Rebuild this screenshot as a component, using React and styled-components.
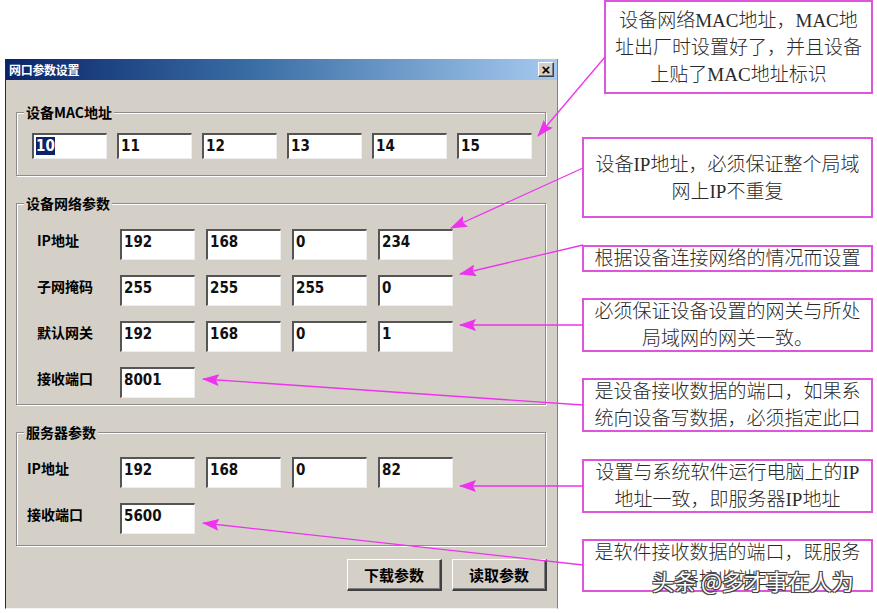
import React from "react";
import styled, { createGlobalStyle } from "styled-components";

const GlobalStyle = createGlobalStyle`
  html, body {
    margin: 0;
    padding: 0;
    background: #ffffff;
  }
  body {
    width: 877px;
    height: 613px;
    overflow: hidden;
  }
`;

const macs = ["10", "11", "12", "13", "14", "15"];

const deviceRows = [
  { label: "IP地址", values: ["192", "168", "0", "234"] },
  { label: "子网掩码", values: ["255", "255", "255", "0"] },
  { label: "默认网关", values: ["192", "168", "0", "1"] },
  { label: "接收端口", values: ["8001"] },
];

const serverRows = [
  { label: "IP地址", values: ["192", "168", "0", "82"] },
  { label: "接收端口", values: ["5600"] },
];

const notes = [
  { gap: 0, height: 94, indent: 22, lines: ["设备网络MAC地址，MAC地", "址出厂时设置好了，并且设备", "上贴了MAC地址标识"] },
  { gap: 43, height: 81, indent: 0, lines: ["设备IP地址，必须保证整个局域", "网上IP不重复"] },
  { gap: 27, height: 27, indent: 0, lines: ["根据设备连接网络的情况而设置"] },
  { gap: 26, height: 54, indent: 0, lines: ["必须保证设备设置的网关与所处", "局域网的网关一致。"] },
  { gap: 26, height: 54, indent: 0, lines: ["是设备接收数据的端口，如果系", "统向设备写数据，必须指定此口"] },
  { gap: 27, height: 54, indent: 0, lines: ["设置与系统软件运行电脑上的IP", "地址一致，即服务器IP地址"] },
  { gap: 26, height: 53, indent: 0, lines: ["是软件接收数据的端口，既服务", "器接收端口"] },
];

// start (callout edge) -> tip (near the field)
const arrows = [
  [605, 57, 538, 136],
  [583, 168, 451, 228],
  [583, 245, 460, 274],
  [583, 325, 460, 325],
  [583, 405, 203, 379],
  [583, 486, 460, 486],
  [583, 565, 203, 523],
];

export default function App() {
  return (
    <>
      <GlobalStyle />
      <Page>
        <Dialog>
          <TitleBar>
            <TitleText>网口参数设置</TitleText>
            <CloseButton>×</CloseButton>
          </TitleBar>
          <Body>
            <Group $height={64} $padTop={20}>
              <GroupTitle>设备MAC地址</GroupTitle>
              <MacRow>
                {macs.map((m, i) => (
                  <Field key={m} $h={26}>
                    {i === 0 ? <Selected>{m}</Selected> : m}
                  </Field>
                ))}
              </MacRow>
            </Group>

            <Group $height={202} $padTop={25} $mt={27}>
              <GroupTitle>设备网络参数</GroupTitle>
              <Rows>
                {deviceRows.map((r) => (
                  <Row key={r.label}>
                    <Label $pad={20}>{r.label}</Label>
                    {r.values.map((v, i) => (
                      <Field key={i} $h={31}>{v}</Field>
                    ))}
                  </Row>
                ))}
              </Rows>
            </Group>

            <Group $height={114} $padTop={24} $mt={27}>
              <GroupTitle>服务器参数</GroupTitle>
              <Rows>
                {serverRows.map((r) => (
                  <Row key={r.label}>
                    <Label $pad={10}>{r.label}</Label>
                    {r.values.map((v, i) => (
                      <Field key={i} $h={31}>{v}</Field>
                    ))}
                  </Row>
                ))}
              </Rows>
            </Group>

            <Buttons>
              <Button>下载参数</Button>
              <Button>读取参数</Button>
            </Buttons>
          </Body>
        </Dialog>

        <Notes>
          {notes.map((n, i) => (
            <Note key={i} $gap={n.gap} $h={n.height} $indent={n.indent}>
              {n.lines.map((l) => (
                <NoteLine key={l}>{l}</NoteLine>
              ))}
            </Note>
          ))}
        </Notes>

        <Arrows width="877" height="613" viewBox="0 0 877 613">
          <defs>
            <marker
              id="head"
              markerUnits="userSpaceOnUse"
              markerWidth="17"
              markerHeight="12"
              refX="16"
              refY="6"
              orient="auto"
            >
              <path d="M0,0 L17,6 L0,12 L3,6 z" fill="#ee33ee" />
            </marker>
          </defs>
          {arrows.map(([x1, y1, x2, y2], i) => (
            <line
              key={i}
              x1={x1}
              y1={y1}
              x2={x2}
              y2={y2}
              stroke="#ee33ee"
              strokeWidth="1.3"
              markerEnd="url(#head)"
            />
          ))}
        </Arrows>

        <Watermark>头条 @多才事在人为</Watermark>
      </Page>
    </>
  );
}

const Page = styled.div`
  position: relative;
  display: flex;
  align-items: flex-start;
  width: 877px;
  height: 613px;
  background: #fff;
`;

const Dialog = styled.div`
  margin: 59px 0 0 5px;
  width: 551px;
  height: 549px;
  background: #d4d0c8;
  border-left: 1px solid #2a2a2a;
  border-right: 1px solid #808080;
  border-bottom: 1px solid #f4f4f4;
  font-family: "Liberation Sans", "Noto Sans CJK SC", sans-serif;
  display: flex;
  flex-direction: column;
`;

const TitleBar = styled.div`
  height: 21px;
  display: flex;
  align-items: center;
  justify-content: space-between;
  padding: 0 3px 0 3px;
  background: linear-gradient(to right, #0a246a 0%, #3a6ea5 45%, #a6caf0 100%);
`;

const TitleText = styled.span`
  color: #fff;
  font-size: 12px;
  font-weight: 700;
  font-family: "Noto Sans CJK SC", sans-serif;
  letter-spacing: -0.3px;
`;

const CloseButton = styled.span`
  width: 14px;
  height: 13px;
  display: flex;
  align-items: center;
  justify-content: center;
  background: #d4d0c8;
  color: #000;
  font-size: 15px;
  font-weight: 700;
  line-height: 1;
  border-top: 1px solid #fff;
  border-left: 1px solid #fff;
  border-right: 1px solid #404040;
  border-bottom: 1px solid #404040;
  box-shadow: inset -1px -1px 0 #808080;
`;

const Body = styled.div`
  padding: 32px 11px 0 10px;
  display: flex;
  flex-direction: column;
`;

const Group = styled.div`
  position: relative;
  box-sizing: border-box;
  width: 530px;
  height: ${(p) => p.$height}px;
  margin-top: ${(p) => p.$mt || 0}px;
  padding-top: ${(p) => p.$padTop}px;
  border: 1px solid #8c8c8c;
  box-shadow: inset 1px 1px 0 #fff, 1px 1px 0 #fff;
`;

const GroupTitle = styled.span`
  position: absolute;
  top: -10px;
  left: 7px;
  padding: 0 2px;
  background: #d4d0c8;
  font-family: "Noto Sans CJK SC", sans-serif;
  font-size: 14px;
  font-weight: 700;
  line-height: 18px;
  color: #000;
`;

const MacRow = styled.div`
  display: flex;
  gap: 10px;
  padding-left: 15px;
`;

const Rows = styled.div`
  display: flex;
  flex-direction: column;
  gap: 15px;
`;

const Row = styled.div`
  display: flex;
  align-items: flex-start;
  gap: 11px;
`;

const Label = styled.span`
  box-sizing: border-box;
  width: 92px;
  padding-left: ${(p) => p.$pad}px;
  padding-top: 1px;
  font-family: "Noto Sans CJK SC", sans-serif;
  font-size: 14px;
  font-weight: 700;
  line-height: 20px;
  color: #000;
  white-space: nowrap;
`;

const Field = styled.div`
  box-sizing: border-box;
  width: 75px;
  height: ${(p) => p.$h}px;
  background: #fff;
  border-top: 2px solid #555;
  border-left: 2px solid #555;
  border-right: 1px solid #eeeeee;
  border-bottom: 1px solid #eeeeee;
  padding: 3px 0 0 2px;
  font-family: "DejaVu Sans Condensed", "Liberation Sans", sans-serif;
  font-size: 15px;
  font-weight: 700;
  line-height: 17px;
  color: #111;
`;

const Selected = styled.span`
  background: #0a246a;
  color: #fff;
`;

const Buttons = styled.div`
  display: flex;
  justify-content: flex-end;
  gap: 10px;
  margin-top: 13px;
  width: 531px;
`;

const Button = styled.div`
  box-sizing: border-box;
  width: 95px;
  height: 32px;
  display: flex;
  align-items: center;
  justify-content: center;
  background: #d4d0c8;
  border-top: 1px solid #fff;
  border-left: 1px solid #fff;
  border-right: 2px solid #404040;
  border-bottom: 2px solid #404040;
  box-shadow: inset -1px -1px 0 #808080;
  font-family: "Noto Sans CJK SC", sans-serif;
  font-size: 15px;
  font-weight: 700;
  color: #000;
`;

const Notes = styled.div`
  margin-left: 24px;
  width: 291px;
  display: flex;
  flex-direction: column;
`;

const Note = styled.div`
  box-sizing: border-box;
  margin-top: ${(p) => p.$gap}px;
  margin-left: ${(p) => p.$indent}px;
  width: ${(p) => 291 - p.$indent}px;
  height: ${(p) => p.$h}px;
  border: 2px solid #dd55dd;
  background: #fff;
  display: flex;
  flex-direction: column;
  justify-content: center;
  align-items: center;
  font-family: "Liberation Serif", "Noto Sans CJK SC", serif;
  font-size: 19px;
  font-weight: 300;
  color: #2a2a2a;
`;

const NoteLine = styled.div`
  line-height: 27px;
  white-space: nowrap;
`;

const Arrows = styled.svg`
  position: absolute;
  left: 0;
  top: 0;
  pointer-events: none;
`;

const Watermark = styled.div`
  position: absolute;
  left: 652px;
  top: 565px;
  font-family: "Noto Sans CJK SC", sans-serif;
  font-size: 22px;
  line-height: 30px;
  color: #fff;
  white-space: nowrap;
  text-shadow: -1px -1px 0 #444, 1px -1px 0 #444, -1px 1px 0 #444, 1px 1px 0 #444,
    0 0 2px #333;
`;
